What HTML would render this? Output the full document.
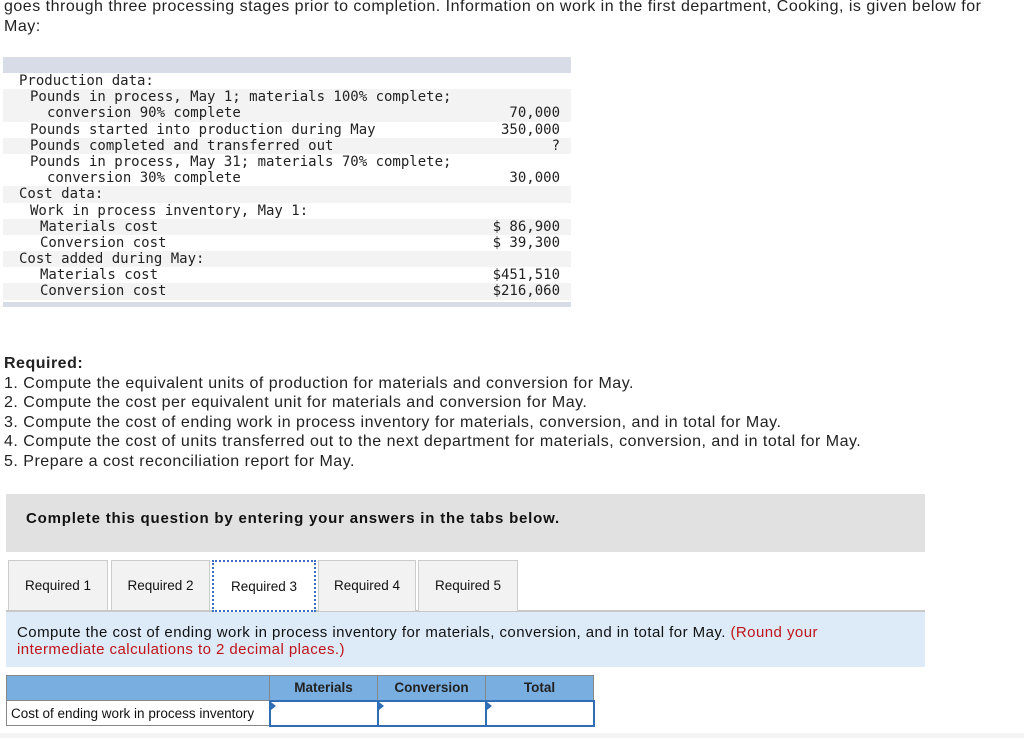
<!DOCTYPE html>
<html><head><meta charset="utf-8"><style>
*{margin:0;padding:0;box-sizing:border-box}
body{width:1024px;height:738px;overflow:hidden;background:#fff;font-family:"Liberation Sans",Arial,sans-serif;color:#222;position:relative}
.p{position:absolute;left:4px;font-size:16px;line-height:19.5px;white-space:nowrap;letter-spacing:0.5px}
.dt{position:absolute;left:3px;top:57px;width:568px}
.dt .bar{height:16px;background:#d7dce7}
.dt .r{height:16.2px;font-family:"DejaVu Sans Mono","Liberation Mono",monospace;font-size:14px;line-height:16.2px;position:relative;white-space:pre;color:#222}
.dt .g{background:#f3f3f3}
.l0{padding-left:16px}.l1{padding-left:27px}.l2{padding-left:44px}.l3{padding-left:37px}
.dt .v{position:absolute;right:11px;top:0}
.dt .bb{height:5px;background:#d7dce7;margin-top:2px}
.grey{position:absolute;left:6px;top:494px;width:919px;height:58px;background:#e1e1e1}
.grey b{position:absolute;left:20px;top:16px;font-size:15px;letter-spacing:0.8px;color:#111}
.tab{position:absolute;top:560px;height:51px;background:#f2f2f2;border:1px solid #ccc;border-bottom:none;font-size:13.5px;text-align:center;line-height:50px;color:#111}
.tab.a{background:#fff;border:2px dotted #3a6fc4;height:52px}
.line{position:absolute;left:6px;top:610px;width:919px;height:2px;background:#c8c8c8}
.blue{position:absolute;left:6px;top:612px;width:919px;height:55px;background:#dcebf7;font-size:15px;letter-spacing:0.45px;line-height:17px;padding:12px 0 0 11px;color:#111;white-space:nowrap}
.blue span{color:#c0141b}
table{position:absolute;left:6px;top:675px;border-collapse:collapse;font-size:13.5px}
td{border:1px solid #888;height:25px}
.h td{background:#79aee0;font-weight:bold;text-align:center;color:#222}
.in{border:2px solid #2f6eb5;position:relative}
.in:before{content:"";position:absolute;left:0;top:0;border-left:5px solid #2f6eb5;border-top:4px solid transparent;border-bottom:4px solid transparent}
.foot{position:absolute;left:0;top:733px;width:1024px;height:5px;background:#f4f4f4}
</style></head><body>
<div class="p" style="top:-3px">goes through three processing stages prior to completion. Information on work in the first department, Cooking, is given below for<br>May:</div>
<div class="dt">
<div class="bar"></div>
<div class="r l0">Production data:</div>
<div class="r g l1">Pounds in process, May 1; materials 100% complete;</div>
<div class="r g l2">conversion 90% complete<span class="v">70,000</span></div>
<div class="r l1">Pounds started into production during May<span class="v">350,000</span></div>
<div class="r g l1">Pounds completed and transferred out<span class="v">?</span></div>
<div class="r l1">Pounds in process, May 31; materials 70% complete;</div>
<div class="r l2">conversion 30% complete<span class="v">30,000</span></div>
<div class="r g l0">Cost data:</div>
<div class="r l1">Work in process inventory, May 1:</div>
<div class="r g l3">Materials cost<span class="v">$ 86,900</span></div>
<div class="r l3">Conversion cost<span class="v">$ 39,300</span></div>
<div class="r g l0">Cost added during May:</div>
<div class="r l3">Materials cost<span class="v">$451,510</span></div>
<div class="r g l3">Conversion cost<span class="v">$216,060</span></div>
<div class="bb"></div>
</div>
<div class="p" style="top:354px"><b>Required:</b><br>1. Compute the equivalent units of production for materials and conversion for May.<br>2. Compute the cost per equivalent unit for materials and conversion for May.<br>3. Compute the cost of ending work in process inventory for materials, conversion, and in total for May.<br>4. Compute the cost of units transferred out to the next department for materials, conversion, and in total for May.<br>5. Prepare a cost reconciliation report for May.</div>
<div class="grey"><b>Complete this question by entering your answers in the tabs below.</b></div>
<div class="tab" style="left:8px;width:100px">Required 1</div>
<div class="tab" style="left:111px;width:99px">Required 2</div>
<div class="line"></div>
<div class="tab a" style="left:212px;width:104px">Required 3</div>
<div class="tab" style="left:318px;width:98px">Required 4</div>
<div class="tab" style="left:418px;width:100px">Required 5</div>
<div class="blue">Compute the cost of ending work in process inventory for materials, conversion, and in total for May. <span>(Round your<br>intermediate calculations to 2 decimal places.)</span></div>
<table>
<tr class="h"><td style="width:263px"></td><td style="width:108px">Materials</td><td style="width:108px">Conversion</td><td style="width:108px">Total</td></tr>
<tr><td style="padding-left:4px;color:#111">Cost of ending work in process inventory</td><td class="in"></td><td class="in"></td><td class="in"></td></tr>
</table>
<div class="foot"></div>
</body></html>
